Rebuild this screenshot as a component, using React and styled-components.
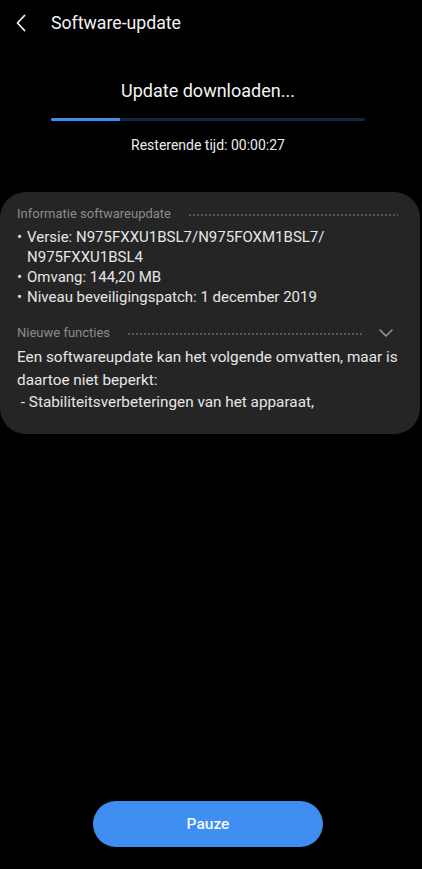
import React from 'react';
import styled, { createGlobalStyle } from 'styled-components';

const GlobalStyle = createGlobalStyle`
  html, body {
    margin: 0;
    padding: 0;
    background: #000;
  }
  body {
    font-family: Roboto, 'Noto Sans', sans-serif;
    color: #f2f2f2;
  }
`;

const Screen = styled.div`
  width: 422px;
  height: 869px;
  background: #000;
  display: flex;
  flex-direction: column;
  overflow: hidden;
`;

const TopBar = styled.div`
  display: flex;
  align-items: center;
  height: 46px;
  padding-left: 14px;
`;

const BackButton = styled.button`
  background: none;
  border: none;
  padding: 0;
  width: 14px;
  height: 20px;
  display: flex;
  align-items: center;
  justify-content: center;
  color: #f2f2f2;
`;

const Title = styled.h1`
  margin: 0 0 0 23px;
  font-size: 17.7px;
  font-weight: 400;
  color: #f2f2f2;
`;

const Progress = styled.section`
  display: flex;
  flex-direction: column;
  align-items: center;
  padding: 34px 6px 0 0;
`;

const Status = styled.div`
  font-size: 18px;
  color: #f4f4f4;
`;

const Track = styled.div`
  width: 314px;
  height: 3px;
  margin-top: 17px;
  border-radius: 2px;
  background: #0f2744;
  overflow: hidden;
`;

const Fill = styled.div`
  height: 100%;
  background: #3d8ef0;
`;

const Remaining = styled.div`
  margin-top: 16px;
  font-size: 14px;
  color: #ececec;
`;

const Card = styled.section`
  margin: 39px 2px 0 0;
  background: #252525;
  border-radius: 26px;
  padding: 14px 22px 20px 17px;
`;

const SectionHead = styled.div`
  display: flex;
  align-items: center;
  gap: 17px;
  font-size: 13px;
  color: #8c8c8c;
  margin-top: ${p => p.$top || 0}px;
`;

const Dots = styled.div`
  flex: 1;
  height: 2px;
  margin-top: 2px;
  background-image: radial-gradient(circle, #575757 0.9px, transparent 1.1px);
  background-size: 4px 2px;
  background-repeat: repeat-x;
`;

const Chevron = styled.div`
  display: flex;
  margin-left: -1px;
  margin-right: 5px;
  color: #9a9a9a;
`;

const InfoList = styled.ul`
  list-style: none;
  margin: 6px 0 0;
  padding: 0;
  font-size: 15px;
  line-height: 20px;
  color: #e6e6e6;
`;

const InfoItem = styled.li`
  display: flex;
  & > span:first-child {
    width: 10px;
    flex-shrink: 0;
  }
`;

const Body = styled.p`
  margin: 6px -6px 0 0;
  font-size: 15.3px;
  line-height: 22.5px;
  color: #e6e6e6;
  white-space: pre-wrap;
`;

const Spacer = styled.div`
  flex: 1;
`;

const Footer = styled.div`
  display: flex;
  justify-content: center;
  padding: 0 6px 22px 0;
`;

const PauseButton = styled.button`
  width: 230px;
  height: 46px;
  border: none;
  border-radius: 23px;
  background: #3f8ef2;
  color: #f4f8ff;
  font-family: Roboto, 'Noto Sans', sans-serif;
  font-size: 15.5px;
  font-weight: 500;
`;

const info = [
  ['Versie: N975FXXU1BSL7/N975FOXM1BSL7/', 'N975FXXU1BSL4'],
  ['Omvang: 144,20 MB'],
  ['Niveau beveiligingspatch: 1 december 2019'],
];

export default function App() {
  const progress = 22;
  return (
    <>
      <GlobalStyle />
      <Screen>
        <TopBar>
          <BackButton aria-label="Terug">
            <svg width="10" height="18" viewBox="0 0 10 18" fill="none">
              <path d="M8.5 1.5 1.5 9l7 7.5" stroke="currentColor" strokeWidth="1.8" strokeLinecap="round" strokeLinejoin="round" />
            </svg>
          </BackButton>
          <Title>Software-update</Title>
        </TopBar>

        <Progress>
          <Status>Update downloaden...</Status>
          <Track>
            <Fill style={{ width: `${progress}%` }} />
          </Track>
          <Remaining>Resterende tijd: 00:00:27</Remaining>
        </Progress>

        <Card>
          <SectionHead>
            Informatie softwareupdate
            <Dots />
          </SectionHead>
          <InfoList>
            {info.map((lines, i) => (
              <InfoItem key={i}>
                <span>•</span>
                <span>
                  {lines.map((l, j) => (
                    <div key={j}>{l}</div>
                  ))}
                </span>
              </InfoItem>
            ))}
          </InfoList>

          <SectionHead $top={18}>
            Nieuwe functies
            <Dots />
            <Chevron>
              <svg width="14" height="8" viewBox="0 0 14 8" fill="none">
                <path d="M1 1 7 7l6-6" stroke="currentColor" strokeWidth="1.5" strokeLinecap="round" strokeLinejoin="round" />
              </svg>
            </Chevron>
          </SectionHead>
          <Body>
            {'Een softwareupdate kan het volgende omvatten, maar is daartoe niet beperkt:\n - Stabiliteitsverbeteringen van het apparaat,'}
          </Body>
        </Card>

        <Spacer />
        <Footer>
          <PauseButton>Pauze</PauseButton>
        </Footer>
      </Screen>
    </>
  );
}
